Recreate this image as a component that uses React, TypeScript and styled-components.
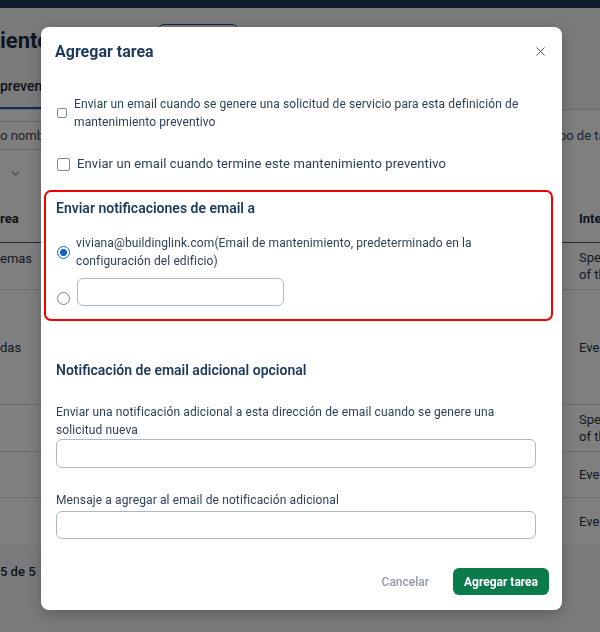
import styled, { createGlobalStyle } from 'styled-components';
import { ChevronDown, X } from 'lucide-react';

const GlobalStyle = createGlobalStyle`
  html, body {
    margin: 0;
    padding: 0;
    overflow: hidden;
    background: #f6f6f6;
  }
  body {
    font-family: Roboto, 'Liberation Sans', sans-serif;
  }
  * {
    box-sizing: border-box;
  }
`;

const rows = [
  { left: 'emas', right: ['Spe', 'of th'], height: 47, top: true },
  { left: 'das', right: ['Eve'], height: 115, top: false },
  { left: '', right: ['Spe', 'of th'], height: 47, top: false },
  { left: '', right: ['Eve'], height: 46, top: false },
  { left: '', right: ['Eve'], height: 47, top: false },
];

export default function App() {
  return (
    <>
      <GlobalStyle />
      <Page>
        <TopBar />
        <TitleRow>
          <PageTitle>iento preventivo</PageTitle>
          <OutlineButton />
        </TitleRow>
        <TabsBar>
          <Tab $active>preventivo</Tab>
        </TabsBar>
        <Card>
          <FilterRow>
            <SearchBox>o nombre</SearchBox>
            <span />
            <FilterLabel>Tipo de tarea</FilterLabel>
          </FilterRow>
          <SelectRow>
            <ChevronDown size={13} strokeWidth={1.6} color="#2a3442" />
          </SelectRow>
          <Table>
            <HeadRow>
              <HeadCell>rea</HeadCell>
              <span />
              <HeadCell $right>Intervalo</HeadCell>
            </HeadRow>
            {rows.map((r, i) => (
              <BodyRow key={i} $h={r.height} $last={i === rows.length - 1}>
                <Cell $top={r.top}>{r.left}</Cell>
                <span />
                <Cell $right>
                  {r.right.map((l) => (
                    <div key={l}>{l}</div>
                  ))}
                </Cell>
              </BodyRow>
            ))}
          </Table>
        </Card>
        <Pager>5 de 5</Pager>
      </Page>

      <Overlay />

      <Modal role="dialog">
        <ModalHeader>
          <ModalTitle>Agregar tarea</ModalTitle>
          <CloseButton aria-label="Cerrar">
            <X size={15} strokeWidth={1.6} />
          </CloseButton>
        </ModalHeader>

        <ModalBody>
          <CheckRow>
            <CheckBox $size={10} />
            <CheckText>
              Enviar un email cuando se genere una solicitud de servicio para esta definición de mantenimiento
              preventivo
            </CheckText>
          </CheckRow>
          <CheckRow $second>
            <CheckBox $size={13} />
            <CheckText $large>Enviar un email cuando termine este mantenimiento preventivo</CheckText>
          </CheckRow>

          <HighlightBox>
            <SectionTitle>Enviar notificaciones de email a</SectionTitle>
            <RadioRow>
              <Radio $checked />
              <RadioText>
                viviana@buildinglink.com(Email de mantenimiento, predeterminado en la configuración del edificio)
              </RadioText>
            </RadioRow>
            <RadioRow $input>
              <Radio />
              <SmallInput />
            </RadioRow>
          </HighlightBox>

          <SectionTitle $spaced>Notificación de email adicional opcional</SectionTitle>

          <FieldLabel>
            Enviar una notificación adicional a esta dirección de email cuando se genere una solicitud nueva
          </FieldLabel>
          <WideInput />

          <FieldLabel $gap>Mensaje a agregar al email de notificación adicional</FieldLabel>
          <WideInput $tight />
        </ModalBody>

        <ModalFooter>
          <GhostButton>Cancelar</GhostButton>
          <PrimaryButton>Agregar tarea</PrimaryButton>
        </ModalFooter>
      </Modal>
    </>
  );
}

/* ---------- background page ---------- */

const Page = styled.div`
  width: 680px;
  height: 632px;
  background: #f6f6f6;
  color: #1c2a3c;
`;

const TopBar = styled.div`
  height: 8px;
  background: #1b3657;
`;

const TitleRow = styled.div`
  display: flex;
  align-items: center;
  margin-top: 16px;
  height: 32px;
`;

const PageTitle = styled.div`
  width: 157px;
  font-size: 22px;
  font-weight: 700;
  white-space: nowrap;
  overflow: hidden;
  color: #1a2d45;
`;

const OutlineButton = styled.div`
  width: 82px;
  height: 32px;
  border: 1px solid #1d4f86;
  border-radius: 7px;
`;

const TabsBar = styled.div`
  display: flex;
  height: 54px;
  border-bottom: 1px solid #d7dce2;
`;

const Tab = styled.div<{ $active?: boolean }>`
  padding-top: 20px;
  height: 53px;
  line-height: 20px;
  font-size: 14px;
  font-weight: 500;
  color: #1c2a3c;
  border-bottom: 2px solid ${(p) => (p.$active ? '#1d5fa8' : 'transparent')};
`;

const Card = styled.div`
  background: #ffffff;
  height: 435px;
  padding-top: 11px;
`;

const FilterRow = styled.div`
  display: grid;
  grid-template-columns: 200px 1fr 132px;
  height: 29px;
  align-items: center;
`;

const SearchBox = styled.div`
  height: 29px;
  line-height: 27px;
  border-top: 1px solid #c9cfd6;
  border-bottom: 1px solid #c9cfd6;
  font-size: 13px;
  color: #3a4656;
`;

const FilterLabel = styled.div`
  font-size: 13px;
  color: #3a4656;
`;

const SelectRow = styled.div`
  display: flex;
  align-items: center;
  height: 26px;
  margin-top: 10px;
  padding-left: 9px;
`;

const Table = styled.div`
  margin-top: 9px;
`;

const HeadRow = styled.div`
  display: grid;
  grid-template-columns: 200px 1fr 115px;
  height: 48px;
  align-items: center;
  border-bottom: 1px solid #4b5868;
`;

const HeadCell = styled.div<{ $right?: boolean }>`
  font-size: 13px;
  font-weight: 700;
  color: #1c2a3c;
  white-space: nowrap;
  padding-left: ${(p) => (p.$right ? '14px' : '0')};
`;

const BodyRow = styled.div<{ $h: number; $last?: boolean }>`
  display: grid;
  grid-template-columns: 200px 1fr 115px;
  height: ${(p) => p.$h}px;
  align-items: center;
  border-bottom: ${(p) => (p.$last ? 'none' : '1px solid #d7dce2')};
`;

const Cell = styled.div<{ $right?: boolean; $top?: boolean }>`
  font-size: 13px;
  line-height: 17px;
  color: #2a3646;
  padding-left: ${(p) => (p.$right ? '14px' : '0')};
  align-self: ${(p) => (p.$top ? 'start' : 'center')};
  padding-top: ${(p) => (p.$top ? '7px' : '0')};
`;

const Pager = styled.div`
  margin-top: 18px;
  font-size: 13px;
  line-height: 18px;
  font-weight: 500;
  color: #1c2a3c;
`;

const Overlay = styled.div`
  position: fixed;
  inset: 0;
  background: rgba(0, 0, 0, 0.5);
`;

/* ---------- modal ---------- */

const Modal = styled.div`
  position: fixed;
  top: 27px;
  left: 41px;
  width: 521px;
  height: 583px;
  background: #ffffff;
  border-radius: 8px;
  box-shadow: 0 4px 16px rgba(0, 0, 0, 0.25);
  display: flex;
  flex-direction: column;
  color: #2b3f58;
`;

const ModalHeader = styled.div`
  display: flex;
  align-items: center;
  justify-content: space-between;
  height: 48px;
  padding: 0 14px 0 14px;
`;

const ModalTitle = styled.div`
  font-size: 16px;
  font-weight: 700;
  color: #1c3a5b;
`;

const CloseButton = styled.div`
  display: flex;
  align-items: center;
  justify-content: center;
  width: 16px;
  height: 16px;
  color: #4e6177;
`;

const ModalBody = styled.div`
  flex: 1;
  padding: 20px 25px 0 15px;
  display: flex;
  flex-direction: column;
`;

const CheckRow = styled.div<{ $second?: boolean }>`
  display: flex;
  align-items: center;
  gap: 7px;
  padding-left: 1px;
  margin-top: ${(p) => (p.$second ? '24px' : '0')};
  padding-right: 10px;
`;

const CheckBox = styled.span<{ $size: number }>`
  flex: none;
  width: ${(p) => p.$size}px;
  height: ${(p) => p.$size}px;
  border: 1px solid #7d8a98;
  border-radius: 2px;
  background: #ffffff;
`;

const CheckText = styled.div<{ $large?: boolean }>`
  font-size: ${(p) => (p.$large ? '13px' : '12px')};
  letter-spacing: ${(p) => (p.$large ? '0.1px' : '0.12px')};
  line-height: 18px;
  color: #2b3f58;
`;

const HighlightBox = styled.div`
  margin: 17px 0 0 -12px;
  width: 509px;
  height: 131px;
  border: 2px solid #f20000;
  border-radius: 7px;
  padding: 7px 10px 0 10px;
`;

const SectionTitle = styled.div<{ $spaced?: boolean }>`
  font-size: 14px;
  line-height: 18px;
  font-weight: 600;
  color: #1c3a5b;
  margin-top: ${(p) => (p.$spaced ? '40px' : '0')};
`;

const RadioRow = styled.div<{ $input?: boolean }>`
  display: flex;
  align-items: ${(p) => (p.$input ? 'flex-end' : 'center')};
  gap: ${(p) => (p.$input ? '7px' : '6px')};
  margin-top: ${(p) => (p.$input ? '8px' : '17px')};
  padding-left: 1px;
`;

const Radio = styled.span<{ $checked?: boolean }>`
  flex: none;
  width: 13px;
  height: 13px;
  border-radius: 50%;
  border: 1.5px solid ${(p) => (p.$checked ? '#1565c0' : '#7d8a98')};
  background: ${(p) => (p.$checked ? 'radial-gradient(circle, #1565c0 0 3.3px, #ffffff 3.8px)' : '#ffffff')};
  margin-bottom: ${(p) => (p.$checked ? '0' : '1px')};
`;

const RadioText = styled.div`
  font-size: 12px;
  letter-spacing: 0.12px;
  line-height: 18px;
  color: #2b3f58;
  padding-right: 20px;
`;

const SmallInput = styled.div`
  width: 207px;
  height: 28px;
  border: 1px solid #aeb8c4;
  border-radius: 6px;
`;

const FieldLabel = styled.div<{ $gap?: boolean }>`
  font-size: 12px;
  letter-spacing: 0.12px;
  line-height: 18px;
  color: #2b3f58;
  margin-top: ${(p) => (p.$gap ? '23px' : '24px')};
`;

const WideInput = styled.div<{ $tight?: boolean }>`
  width: 480px;
  height: ${(p) => (p.$tight ? '28px' : '29px')};
  margin-top: ${(p) => (p.$tight ? '2px' : '0')};
  border: 1px solid #aeb8c4;
  border-radius: 6px;
`;

const ModalFooter = styled.div`
  display: flex;
  align-items: center;
  justify-content: flex-end;
  gap: 24px;
  padding: 0 13px 15px 0;
`;

const GhostButton = styled.div`
  font-size: 12px;
  font-weight: 500;
  color: #929ca7;
`;

const PrimaryButton = styled.div`
  width: 96px;
  height: 27px;
  border-radius: 6px;
  background: #0b7b4c;
  color: #ffffff;
  font-size: 12px;
  font-weight: 700;
  display: flex;
  align-items: center;
  justify-content: center;
`;
